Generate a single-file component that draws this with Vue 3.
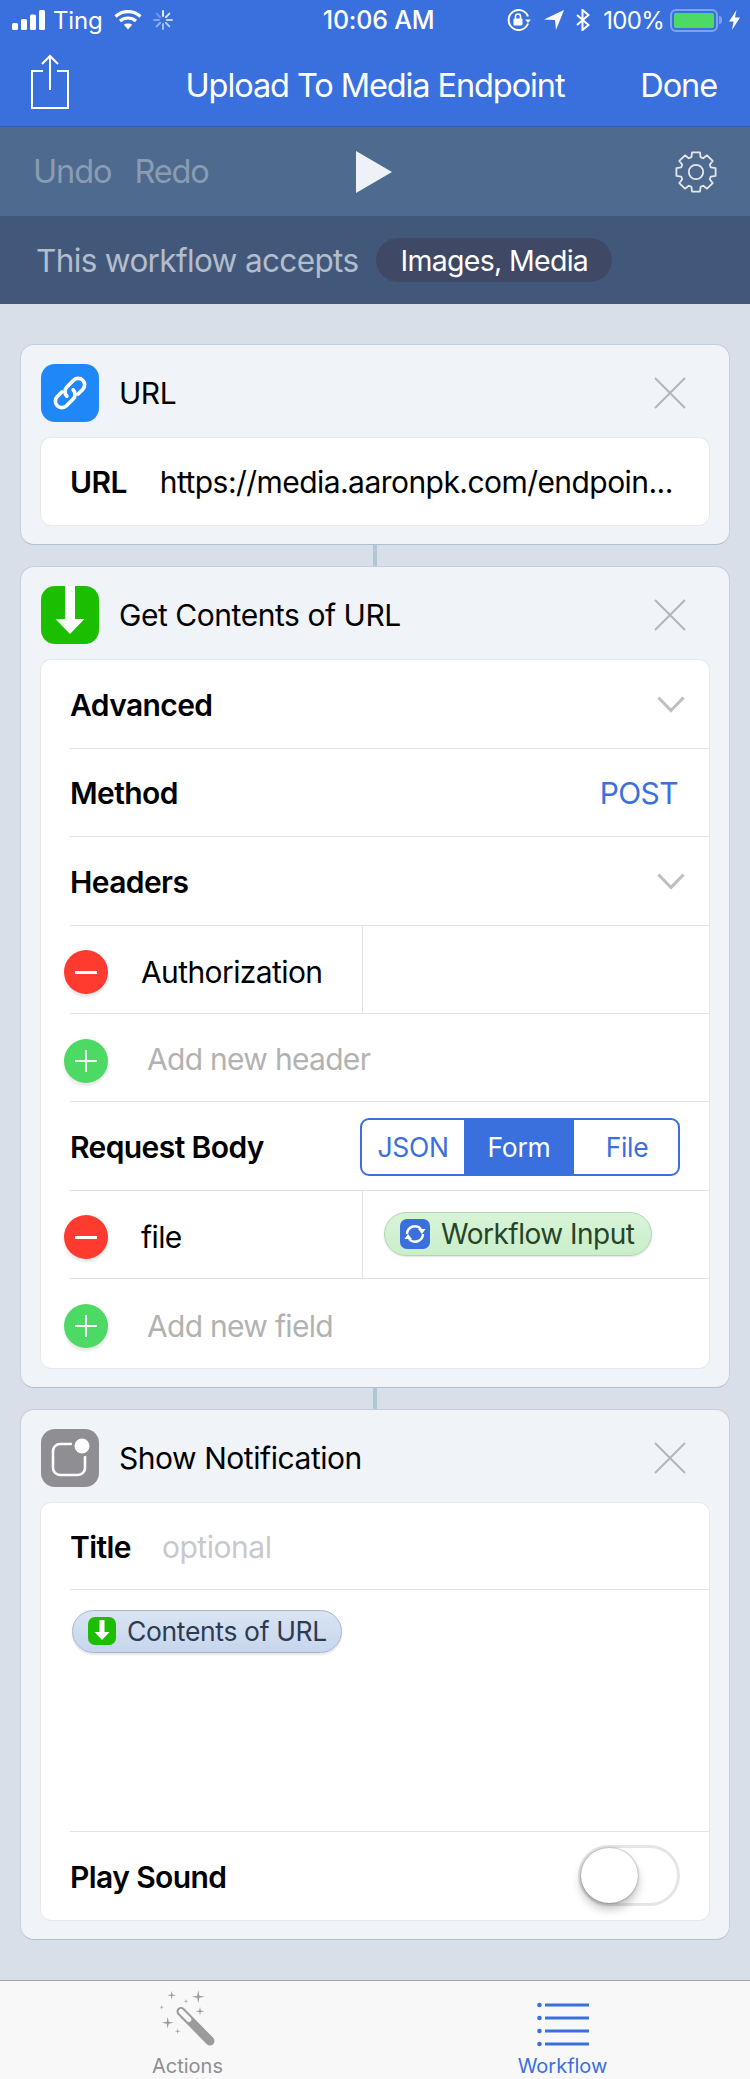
<template>
  <div class="page">
    <!-- Barra superior azul -->
    <header class="top">
      <div class="status">
        <div class="status-left">
          <svg class="signal" width="33" height="20" viewBox="0 0 33 20" fill="#fff">
            <rect x="0" y="13" width="6" height="7" rx="1.5" />
            <rect x="9" y="9" width="6" height="11" rx="1.5" />
            <rect x="18" y="4.5" width="6" height="15.5" rx="1.5" />
            <rect x="27" y="0" width="6" height="20" rx="1.5" />
          </svg>
          <span class="carrier">Ting</span>
          <svg width="28" height="20" viewBox="0 0 28 20" fill="none" stroke="#fff" stroke-width="3.2">
            <path d="M1.5 6.5C8.5 0 19.5 0 26.5 6.5" />
            <path d="M6 11C10.5 7 17.5 7 22 11" />
            <path d="M14 19.5L9.8 14.8C12 13 16 13 18.2 14.8Z" fill="#fff" stroke="none" />
          </svg>
          <svg class="spinner" width="22" height="22" viewBox="0 0 22 22" stroke="#fff" stroke-width="2" stroke-linecap="round">
            <line
              v-for="s in spinnerLines"
              :key="s.angle"
              x1="11" y1="2" x2="11" y2="7"
              :opacity="s.opacity"
              :transform="`rotate(${s.angle} 11 11)`"
            />
          </svg>
        </div>
        <div class="time">10:06 AM</div>
        <div class="status-right">
          <svg width="25" height="22" viewBox="0 0 25 22" fill="none" stroke="#fff" stroke-width="2">
            <path d="M21 14.5A10 10 0 1 1 21 7.5" />
            <path d="M18 10.5h6l-3 3.5z" fill="#fff" stroke="none" />
            <rect x="6.5" y="9.5" width="9" height="7" rx="1" fill="#fff" stroke="none" />
            <path d="M8.5 10V7.5a2.5 2.5 0 0 1 5 0V10" stroke-width="1.6" />
          </svg>
          <svg class="loc" width="20" height="20" viewBox="0 0 20 20" fill="#fff">
            <path d="M20 0L0 9.5L11 10L12 20Z" />
          </svg>
          <svg class="bt" width="14" height="22" viewBox="0 0 14 22" fill="none" stroke="#fff" stroke-width="2">
            <path d="M1 6L12.5 16L6.5 21V1L12.5 6L1 16" />
          </svg>
          <span class="percent">100%</span>
          <div class="battery"><div class="battery-fill"></div></div>
          <div class="battery-nub"></div>
          <svg class="bolt" width="11" height="20" viewBox="0 0 11 20" fill="#fff">
            <path d="M7.5 0L0 11.5H4.5L3 20L11 7.5H6Z" />
          </svg>
        </div>
      </div>
      <nav class="nav">
        <svg class="share" width="40" height="56" viewBox="0 0 40 56" fill="none" stroke="#fff" stroke-width="2">
          <path d="M13 17H2V54H38V17H27" />
          <path d="M20 36V2" />
          <path d="M12 10L20 2L28 10" />
        </svg>
        <span class="nav-title">Upload To Media Endpoint</span>
        <span class="nav-done">Done</span>
      </nav>
    </header>

    <!-- Deshacer, ejecutar y ajustes -->
    <div class="toolbar">
      <div class="undo-redo">
        <span>Undo</span>
        <span>Redo</span>
      </div>
      <svg class="play" width="36" height="42" viewBox="0 0 36 42" fill="#eef1f5">
        <path d="M0 0L36 21L0 42Z" />
      </svg>
      <svg class="gear" width="42" height="42" viewBox="0 0 42 42" fill="none" stroke="#e4e8ee" stroke-width="1.8">
        <path :d="gearPath" stroke-linejoin="round" />
        <circle cx="21" cy="21" r="7.2" />
      </svg>
    </div>

    <div class="accepts">
      <span class="accepts-label">This workflow accepts</span>
      <span class="accepts-pill">Images, Media</span>
    </div>

    <main class="scroll">
      <!-- Acción URL -->
      <section class="card">
        <div class="card-head">
          <div class="app-icon blue">
            <svg width="58" height="58" viewBox="0 0 58 58" fill="none" stroke="#fff" stroke-width="3.7" stroke-linecap="round">
              <g transform="rotate(45 29 29)">
                <path d="M35.5 24V17.5a6.5 6.5 0 0 0-13 0V27a6.5 6.5 0 0 0 6.5 6.5" />
                <path d="M35.5 24V17.5a6.5 6.5 0 0 0-13 0V27a6.5 6.5 0 0 0 6.5 6.5" transform="rotate(180 29 29)" />
              </g>
            </svg>
          </div>
          <span class="card-title">URL</span>
          <svg class="close" width="32" height="32" viewBox="0 0 32 32" stroke="#b4b5ba" stroke-width="2">
            <path d="M1 1L31 31M31 1L1 31" />
          </svg>
        </div>
        <div class="inner">
          <div class="row row-url">
            <span class="label">URL</span>
            <span class="url-value">https://media.aaronpk.com/endpoin...</span>
          </div>
        </div>
      </section>

      <div class="connector"></div>

      <!-- Acción Get Contents of URL -->
      <section class="card">
        <div class="card-head">
          <div class="app-icon green">
            <svg width="58" height="58" viewBox="0 0 58 58" fill="#fff">
              <path d="M24 0H34V33H43.5L29 48L14.5 33H24Z" />
            </svg>
          </div>
          <span class="card-title">Get Contents of URL</span>
          <svg class="close" width="32" height="32" viewBox="0 0 32 32" stroke="#b4b5ba" stroke-width="2">
            <path d="M1 1L31 31M31 1L1 31" />
          </svg>
        </div>
        <div class="inner">
          <div class="row">
            <span class="label">Advanced</span>
            <svg class="chevron" width="28" height="17" viewBox="0 0 30 18" fill="none" stroke="#bfc0c7" stroke-width="3.4">
              <path d="M1.5 1.5L15 15.5L28.5 1.5" />
            </svg>
          </div>
          <div class="row">
            <span class="label">Method</span>
            <span class="post">POST</span>
          </div>
          <div class="row">
            <span class="label">Headers</span>
            <svg class="chevron" width="28" height="17" viewBox="0 0 30 18" fill="none" stroke="#bfc0c7" stroke-width="3.4">
              <path d="M1.5 1.5L15 15.5L28.5 1.5" />
            </svg>
          </div>
          <div class="row row-split">
            <div class="round red"><span class="minus"></span></div>
            <span class="key">Authorization</span>
            <div class="split-right"></div>
          </div>
          <div class="row row-add">
            <div class="round lime"><span class="plus"></span></div>
            <span class="placeholder">Add new header</span>
          </div>
          <div class="row">
            <span class="label">Request Body</span>
            <div class="segments">
              <span class="seg seg-json">JSON</span>
              <span class="seg seg-form">Form</span>
              <span class="seg seg-file">File</span>
            </div>
          </div>
          <div class="row row-split">
            <div class="round red"><span class="minus"></span></div>
            <span class="key">file</span>
            <div class="split-right">
              <div class="token token-green">
                <span class="token-icon token-blue">
                  <svg width="30" height="30" viewBox="0 0 30 30" fill="none" stroke="#fff" stroke-width="2.4">
                    <path d="M7 15A8 8 0 0 1 21 10" />
                    <path d="M23 15A8 8 0 0 1 9 20" />
                    <path d="M18 10H25.5L22 15Z" fill="#fff" stroke="none" />
                    <path d="M4.5 20H12L8 15Z" fill="#fff" stroke="none" />
                  </svg>
                </span>
                <span>Workflow Input</span>
              </div>
            </div>
          </div>
          <div class="row row-add">
            <div class="round lime"><span class="plus"></span></div>
            <span class="placeholder">Add new field</span>
          </div>
        </div>
      </section>

      <div class="connector"></div>

      <!-- Acción Show Notification -->
      <section class="card">
        <div class="card-head">
          <div class="app-icon gray">
            <svg width="58" height="58" viewBox="0 0 58 58" fill="none" stroke="#fff" stroke-width="2.6">
              <rect x="12" y="15" width="32" height="31" rx="7" />
              <circle cx="41" cy="17" r="10.5" fill="#8e8e93" stroke="none" />
              <circle cx="41" cy="17" r="7.5" fill="#fff" stroke="none" />
            </svg>
          </div>
          <span class="card-title">Show Notification</span>
          <svg class="close" width="32" height="32" viewBox="0 0 32 32" stroke="#b4b5ba" stroke-width="2">
            <path d="M1 1L31 31M31 1L1 31" />
          </svg>
        </div>
        <div class="inner">
          <div class="row row-title">
            <span class="label">Title</span>
            <span class="optional">optional</span>
          </div>
          <div class="row-body">
            <div class="token token-slate">
              <span class="token-icon token-lime">
                <svg width="28" height="28" viewBox="0 0 28 28" fill="#fff">
                  <path d="M11.5 3H16.5V15H21.5L14 23L6.5 15H11.5Z" />
                </svg>
              </span>
              <span>Contents of URL</span>
            </div>
          </div>
          <div class="row row-sound">
            <span class="label">Play Sound</span>
            <div class="toggle"><div class="knob"></div></div>
          </div>
        </div>
      </section>
    </main>

    <!-- Pestañas inferiores -->
    <footer class="tabs">
      <div class="tab">
        <svg class="tab-wand" width="64" height="58" viewBox="0 0 64 58" fill="#9b9b9b">
          <path
            v-for="s in sparkles"
            :key="s.x + '-' + s.y"
            :d="`M${s.x} ${s.y - s.r}L${s.x + s.r * 0.16} ${s.y - s.r * 0.16}L${s.x + s.r} ${s.y}L${s.x + s.r * 0.16} ${s.y + s.r * 0.16}L${s.x} ${s.y + s.r}L${s.x - s.r * 0.16} ${s.y + s.r * 0.16}L${s.x - s.r} ${s.y}L${s.x - s.r * 0.16} ${s.y - s.r * 0.16}Z`"
          />
          <g fill="none" stroke-linecap="round">
            <line x1="22" y1="21.5" x2="51" y2="51" stroke="#9b9b9b" stroke-width="9" />
            <line x1="22" y1="21.5" x2="30" y2="29.5" stroke="#f8f8f8" stroke-width="5" />
          </g>
        </svg>
        <span class="tab-label">Actions</span>
      </div>
      <div class="tab tab-active">
        <svg class="tab-list" width="52" height="46" viewBox="0 0 52 46" fill="#3a70de">
          <template v-for="y in [3, 16, 29, 42]" :key="y">
            <circle cx="2.5" :cy="y" r="2.3" />
            <rect x="8" :y="y - 1.5" width="44" height="3" />
          </template>
        </svg>
        <span class="tab-label">Workflow</span>
      </div>
    </footer>
  </div>
</template>

<script setup>
// Opacidad de las líneas del spinner del status bar
const spinnerLines = Array.from({ length: 8 }, (_, i) => ({
  angle: i * 45,
  opacity: 0.9 - i * 0.09,
}));

const sparkles = [
  { x: 12.7, y: 5.2, r: 4.5 },
  { x: 39.3, y: 6.8, r: 6.5 },
  { x: 27, y: 11.2, r: 2.5 },
  { x: 2.7, y: 17.2, r: 2.5 },
  { x: 41, y: 21.2, r: 4.5 },
  { x: 8.7, y: 32.8, r: 6 },
  { x: 18.7, y: 41.2, r: 3 },
];

// Engranaje de 8 dientes
const buildGear = () => {
  const cx = 21;
  const cy = 21;
  const outer = 20;
  const inner = 15.5;
  const points = [];
  for (let i = 0; i < 8; i++) {
    const a = (i * Math.PI) / 4;
    const steps = [
      [inner, a - 0.3],
      [outer, a - 0.2],
      [outer, a + 0.2],
      [inner, a + 0.3],
    ];
    for (const [r, t] of steps) {
      points.push(
        `${(cx + r * Math.cos(t)).toFixed(2)} ${(cy + r * Math.sin(t)).toFixed(2)}`
      );
    }
  }
  return "M" + points.join("L") + "Z";
};

const gearPath = buildGear();
</script>

<style>
html,
body {
  margin: 0;
  padding: 0;
  background: #d8dfe9;
}
</style>

<style scoped>
.page {
  width: 750px;
  height: 2079px;
  display: flex;
  flex-direction: column;
  overflow: hidden;
  font-family: Inter, "Noto Sans", sans-serif;
  color: #000;
  background: #d8dfe9;
}

/* Barra azul */
.top {
  height: 127px;
  box-sizing: border-box;
  background: #3a70de;
  border-bottom: 1px solid #2f5cb4;
  color: #fff;
  flex-shrink: 0;
}

.status {
  height: 40px;
  display: grid;
  grid-template-columns: 1fr auto 1fr;
  align-items: center;
  padding: 0 10px 0 12px;
  font-size: 24px;
}

.status-left {
  display: flex;
  align-items: center;
}

.carrier {
  margin-left: 8px;
  margin-right: 12px;
  letter-spacing: -0.2px;
}

.spinner {
  margin-left: 10px;
}

.time {
  margin-left: 5px;
  font-size: 25px;
  font-weight: 500;
  letter-spacing: -0.2px;
}

.status-right {
  display: flex;
  align-items: center;
  justify-content: flex-end;
}

.loc {
  margin-left: 12px;
}

.bt {
  margin-left: 12px;
}

.percent {
  margin-left: 13px;
  letter-spacing: -0.7px;
}

.battery {
  width: 48px;
  height: 23px;
  margin-left: 6px;
  box-sizing: border-box;
  border: 2px solid #7ea3eb;
  border-radius: 6px;
  padding: 2px;
}

.battery-fill {
  width: 100%;
  height: 100%;
  background: #4cd964;
  border-radius: 2px;
}

.battery-nub {
  width: 3px;
  height: 8px;
  margin-left: 1px;
  background: #7ea3eb;
  border-radius: 0 3px 3px 0;
}

.bolt {
  margin-left: 7px;
}

.nav {
  height: 86px;
  display: grid;
  grid-template-columns: 1fr auto 1fr;
  align-items: center;
  padding: 0 33px 0 30px;
  font-size: 32.5px;
  letter-spacing: -1.1px;
  box-sizing: border-box;
}

.share {
  margin-top: -3px;
}

.nav-title {
  margin-top: 4px;
  margin-left: 3px;
}

.nav-done {
  margin-top: 4px;
  justify-self: end;
}

/* Barra de herramientas */
.toolbar {
  height: 89px;
  flex-shrink: 0;
  display: grid;
  grid-template-columns: 1fr auto 1fr;
  align-items: center;
  padding: 0 33px;
  background: #4e6a8e;
}

.undo-redo {
  display: flex;
  gap: 23px;
  font-size: 32.5px;
  letter-spacing: -1.1px;
  color: #8a9cb3;
}

.play {
  margin-right: 2px;
}

.gear {
  justify-self: end;
}

.accepts {
  height: 88px;
  flex-shrink: 0;
  display: flex;
  align-items: center;
  padding: 0 0 0 36px;
  background: #42587b;
}

.accepts-label {
  font-size: 31.5px;
  letter-spacing: -0.65px;
  color: #b3bdcb;
}

.accepts-pill {
  margin-left: 18px;
  width: 236px;
  height: 44px;
  display: flex;
  align-items: center;
  justify-content: center;
  border-radius: 22px;
  background: #3f4966;
  color: #fff;
  font-size: 28.5px;
  letter-spacing: -0.7px;
}

/* Tarjetas de acción */
.scroll {
  flex: 1;
  padding: 40.3px 20px 0;
}

.card {
  box-sizing: border-box;
  padding: 19px 20px;
  background: #f0f3f8;
  border: 1px solid #c3d0dc;
  border-bottom-color: #adc0d0;
  border-radius: 14px;
}

.connector {
  width: 4px;
  height: 21.6px;
  margin: 0 auto;
  background: #b3c6d3;
}

.card-head {
  height: 58px;
  display: flex;
  align-items: center;
  margin-bottom: 16px;
}

.app-icon {
  width: 58px;
  height: 58px;
  border-radius: 14px;
  overflow: hidden;
  flex-shrink: 0;
}

.app-icon svg {
  display: block;
}

.blue {
  background: #1f87f8;
}

.green {
  background: #1cbf00;
}

.gray {
  background: #8e8e93;
}

.card-title {
  margin-left: 20px;
  font-size: 30px;
  letter-spacing: -0.45px;
}

.close {
  margin-left: auto;
  margin-right: 23px;
}

.inner {
  background: #fff;
  box-shadow: 0 0 0 1px #e6eaf0;
  border-radius: 10px;
  overflow: hidden;
}

.row {
  height: 88.4px;
  box-sizing: border-box;
  margin-left: 29px;
  padding-top: 1.5px;
  display: flex;
  align-items: center;
  border-bottom: 1.5px solid #e2e3e6;
  font-size: 30px;
  letter-spacing: -0.6px;
}

.row:last-child {
  border-bottom: none;
  padding-top: 3px;
}

.row-url {
  height: 86.6px;
}

.row-url:last-child {
  padding-top: 0;
}

.label {
  font-weight: 600;
  letter-spacing: -0.6px;
}

.url-value {
  margin-left: 33px;
  letter-spacing: -0.55px;
  white-space: nowrap;
}

.chevron {
  margin-left: auto;
  margin-right: 24px;
}

.post {
  margin-left: auto;
  margin-right: 31px;
  color: #3a70de;
}

.row-split {
  position: relative;
  align-items: stretch;
}

.round {
  position: absolute;
  left: -6px;
  top: 24.5px;
  width: 44px;
  height: 44px;
  border-radius: 50%;
  box-shadow: 0 3px 3px rgba(0, 0, 0, 0.1);
}

.red {
  background: #ff3b30;
}

.lime {
  background: #4cd964;
}

.minus {
  display: block;
  width: 22px;
  height: 3px;
  margin: 21px auto 0;
  background: #fff;
}

.plus {
  display: block;
  position: relative;
  width: 22px;
  height: 2px;
  margin: 21px auto 0;
  background: #fff;
}

.plus::after {
  content: "";
  position: absolute;
  left: 10px;
  top: -10px;
  width: 2px;
  height: 22px;
  background: #fff;
}

.key {
  margin-left: 71px;
  align-self: center;
  position: relative;
  top: 2px;
}

.split-right {
  position: absolute;
  left: 292px;
  top: 0;
  bottom: 0;
  right: 0;
  border-left: 1.5px solid #e2e3e6;
}

.row-add {
  position: relative;
}

.placeholder {
  margin-left: 77px;
  padding-top: 1.5px;
  letter-spacing: -0.7px;
  color: #b2b2b2;
}

/* Selector de cuerpo */
.segments {
  margin-left: auto;
  margin-right: 29px;
  width: 320px;
  height: 58px;
  box-sizing: border-box;
  display: flex;
  border: 2.5px solid #3a70de;
  border-radius: 9px;
  overflow: hidden;
  font-size: 26.5px;
  letter-spacing: -0.3px;
  color: #3a70de;
}

.seg {
  display: flex;
  align-items: center;
  justify-content: center;
}

.seg-json {
  width: 102px;
}

.seg-form {
  width: 110px;
  background: #3a70de;
  color: #fff;
}

.seg-file {
  flex: 1;
  padding-left: 2px;
}

/* Fichas de variables */
.token {
  display: flex;
  align-items: center;
  box-sizing: border-box;
  border-radius: 22px;
}

.token-icon {
  display: block;
  flex-shrink: 0;
  border-radius: 7px;
  overflow: hidden;
}

.token-icon svg {
  display: block;
}

.token-green {
  position: absolute;
  left: 21px;
  top: 21.5px;
  width: 268px;
  height: 44px;
  padding-left: 15px;
  gap: 11px;
  color: #264428;
  font-size: 28px;
  letter-spacing: -0.5px;
  background: linear-gradient(#d8f4d8, #caeeca);
  border: 1px solid #b2d6b4;
  box-shadow: 0 1px 2px rgba(0, 0, 0, 0.12);
}

.token-blue {
  width: 30px;
  height: 30px;
  background: #3a70de;
}

.row-title {
  height: 87px;
}

.optional {
  margin-left: 31px;
  letter-spacing: -0.45px;
  color: #c8c8ce;
}

.row-body {
  height: 242px;
  box-sizing: border-box;
  margin-left: 29px;
  padding-top: 19.5px;
  border-bottom: 1.5px solid #e2e3e6;
}

.row-sound {
  height: 87.4px;
}

.token-slate {
  width: 270px;
  height: 43px;
  padding-left: 15px;
  gap: 11px;
  margin-left: 2px;
  color: #2d3b52;
  font-size: 26.5px;
  letter-spacing: -0.35px;
  background: linear-gradient(#dae5f3, #c7d5ec);
  border: 1px solid #a6b6cf;
  box-shadow: 0 2px 2px rgba(0, 0, 0, 0.1);
}

.token-lime {
  width: 28px;
  height: 28px;
  background: #1cbf00;
}

/* Interruptor */
.toggle {
  margin-left: auto;
  margin-right: 29px;
  width: 102px;
  height: 61px;
  box-sizing: border-box;
  border: 3px solid #e5e5e7;
  border-radius: 31px;
  position: relative;
  top: -1.5px;
}

.knob {
  width: 57px;
  height: 55px;
  border-radius: 50%;
  background: #fff;
  box-shadow: 0 6px 10px rgba(0, 0, 0, 0.25), 0 0 2px rgba(0, 0, 0, 0.5);
}

/* Pestañas */
.tabs {
  height: 99px;
  flex-shrink: 0;
  box-sizing: border-box;
  display: flex;
  background: #f8f8f8;
  border-top: 1.5px solid #a0a5b0;
}

.tab {
  width: 375px;
  position: relative;
  text-align: center;
  color: #8e8e93;
}

.tab-active {
  color: #3a70de;
}

.tab-wand {
  position: absolute;
  left: 159px;
  top: 9px;
}

.tab-list {
  position: absolute;
  left: 162px;
  top: 21px;
}

.tab-label {
  position: absolute;
  left: 0;
  right: 0;
  top: 73px;
  font-size: 20px;
  line-height: 24px;
}
</style>
